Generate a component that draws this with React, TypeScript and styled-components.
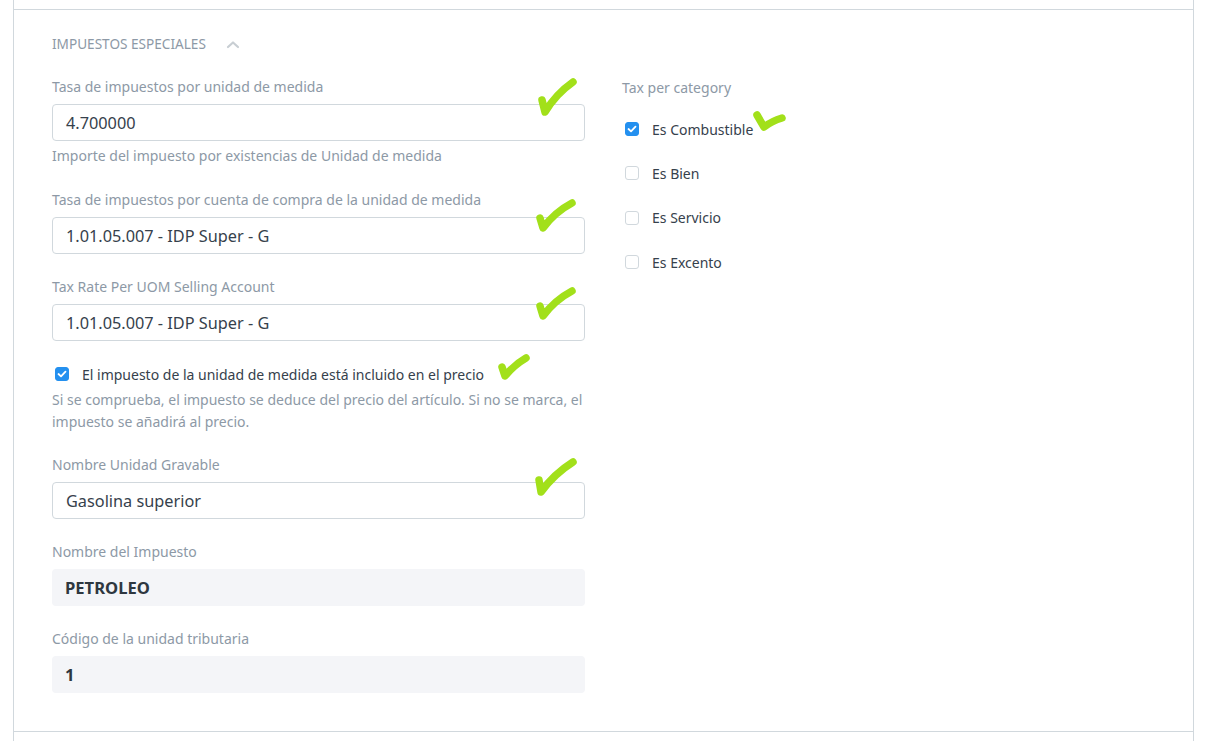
import React from "react";
import styled, { createGlobalStyle } from "styled-components";

const GlobalStyle = createGlobalStyle`
  html, body { margin: 0; padding: 0; background: #ffffff; }
  body { font-family: "Noto Sans", "Open Sans", sans-serif; color: #36414c; }
  * { box-sizing: border-box; }
`;

const Page = styled.div`
  position: relative;
  width: 1205px;
  height: 743px;
  overflow: hidden;
  padding-left: 13px;
`;

const Card = styled.div`
  width: 1181px;
  border-left: 1px solid #d1d8dd;
  border-right: 1px solid #d1d8dd;
`;

const PrevSection = styled.div`
  height: 9px;
`;

const Section = styled.section`
  border-top: 1px solid #d1d8dd;
  border-bottom: 1px solid #d1d8dd;
  padding: 24px 37px 38px 38px;
`;

const SectionHead = styled.div`
  display: flex;
  align-items: center;
  gap: 20px;
  height: 20px;
  font-size: 13.6px;
  line-height: 20px;
  text-transform: uppercase;
  color: #8d99a6;
  margin-bottom: 23px;
`;

const Columns = styled.div`
  display: grid;
  grid-template-columns: 533px 533px;
  column-gap: 37px;
`;

const Column = styled.div`
  display: flex;
  flex-direction: column;
`;

const Field = styled.div<{ $gap?: number }>`
  display: flex;
  flex-direction: column;
  margin-bottom: ${(p) => (p.$gap ?? 23)}px;
  &:last-child { margin-bottom: 0; }
`;

const Label = styled.div`
  font-size: 14px;
  line-height: 20px;
  color: #8d99a6;
  margin-bottom: 7px;
`;

const Input = styled.div`
  height: 37px;
  border: 1px solid #d1d8dd;
  border-radius: 4px;
  padding: 0 13px;
  display: flex;
  align-items: center;
  font-size: 16.3px;
  color: #36414c;
`;

const ReadOnly = styled.div`
  height: 37px;
  border-radius: 4px;
  background: #f4f5f8;
  padding: 0 13px;
  display: flex;
  align-items: center;
  font-size: 16.6px;
  font-weight: 700;
  color: #2e3740;
`;

const Help = styled.div`
  font-size: 14px;
  line-height: 22px;
  color: #8d99a6;
  margin-top: 4px;
`;

const CheckRow = styled.label<{ $indent?: number }>`
  display: flex;
  align-items: center;
  height: 22px;
  padding-left: ${(p) => p.$indent ?? 3}px;
  gap: 13px;
  font-size: 14px;
  color: #36414c;
`;

const Box = styled.span<{ $on?: boolean }>`
  width: 14px;
  height: 14px;
  border-radius: 3px;
  flex: none;
  display: inline-flex;
  align-items: center;
  justify-content: center;
  background: ${(p) => (p.$on ? "#2490ef" : "#ffffff")};
  border: 1px solid ${(p) => (p.$on ? "#2490ef" : "#d1d8dd")};
`;

const CatList = styled.div`
  display: flex;
  flex-direction: column;
  gap: 22.4px;
  margin-top: 20px;
`;

const RightLabel = styled(Label)`
  margin-bottom: 0;
  margin-top: 1px;
`;

const Overlay = styled.svg`
  position: absolute;
  left: 0;
  top: 0;
  pointer-events: none;
`;

const Tick = () => (
  <svg width="10" height="8" viewBox="0 0 10 8">
    <path d="M1.5 4 L4 6.3 L8.5 1.6" fill="none" stroke="#fff" strokeWidth="1.8" strokeLinecap="round" strokeLinejoin="round" />
  </svg>
);

const CheckBox = ({ on }: { on?: boolean }) => <Box $on={on}>{on && <Tick />}</Box>;

const marks = [
  "M542 100 L545 112 Q556 94 573 82",
  "M540 218 L543 228 Q555 212 572 203",
  "M540 306 L543 316 Q555 300 572 291",
  "M502 367 L505 376 Q514 365 526 358",
  "M539 480 L541 492 Q554 474 573 462",
  "M757 115 L764 127 Q772 121 782 118",
];

export default function App() {
  return (
    <>
      <GlobalStyle />
      <Page>
        <Card>
          <PrevSection />
          <Section>
            <SectionHead>
              <span>Impuestos Especiales</span>
              <svg width="14" height="9" viewBox="0 0 14 9">
                <path d="M2 7 L7 2.5 L12 7" fill="none" stroke="#c8ced3" strokeWidth="2.2" strokeLinecap="round" strokeLinejoin="round" />
              </svg>
            </SectionHead>
            <Columns>
              <Column>
                <Field>
                  <Label>Tasa de impuestos por unidad de medida</Label>
                  <Input>4.700000</Input>
                  <Help>Importe del impuesto por existencias de Unidad de medida</Help>
                </Field>
                <Field>
                  <Label>Tasa de impuestos por cuenta de compra de la unidad de medida</Label>
                  <Input>1.01.05.007 - IDP Super - G</Input>
                </Field>
                <Field $gap={22}>
                  <Label>Tax Rate Per UOM Selling Account</Label>
                  <Input>1.01.05.007 - IDP Super - G</Input>
                </Field>
                <Field $gap={22}>
                  <CheckRow>
                    <CheckBox on />
                    <span>El impuesto de la unidad de medida está incluido en el precio</span>
                  </CheckRow>
                  <Help>Si se comprueba, el impuesto se deduce del precio del artículo. Si no se marca, el impuesto se añadirá al precio.</Help>
                </Field>
                <Field>
                  <Label>Nombre Unidad Gravable</Label>
                  <Input>Gasolina superior</Input>
                </Field>
                <Field>
                  <Label>Nombre del Impuesto</Label>
                  <ReadOnly>PETROLEO</ReadOnly>
                </Field>
                <Field>
                  <Label>Código de la unidad tributaria</Label>
                  <ReadOnly>1</ReadOnly>
                </Field>
              </Column>
              <Column>
                <RightLabel>Tax per category</RightLabel>
                <CatList>
                  <CheckRow><CheckBox on /><span>Es Combustible</span></CheckRow>
                  <CheckRow><CheckBox /><span>Es Bien</span></CheckRow>
                  <CheckRow><CheckBox /><span>Es Servicio</span></CheckRow>
                  <CheckRow><CheckBox /><span>Es Excento</span></CheckRow>
                </CatList>
              </Column>
            </Columns>
          </Section>
          <PrevSection />
        </Card>
        <Overlay width="1205" height="743" viewBox="0 0 1205 743">
          {marks.map((d, i) => (
            <path key={i} d={d} fill="none" stroke="#a2e01a" strokeWidth="7.5" strokeLinecap="round" strokeLinejoin="round" />
          ))}
        </Overlay>
      </Page>
    </>
  );
}
